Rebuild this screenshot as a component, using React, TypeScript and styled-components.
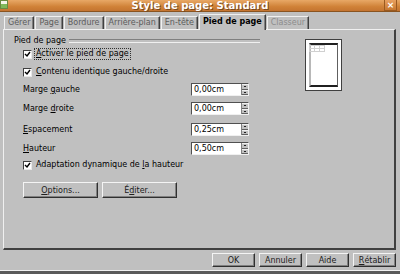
import React from "react";
import styled, { createGlobalStyle } from "styled-components";

const Global = createGlobalStyle`
  html, body { margin: 0; padding: 0; background: #c0c0c0; }
  body { font-family: "DejaVu Sans", "Liberation Sans", sans-serif; font-size: 8px; color: #000; }
  * { box-sizing: border-box; }
`;

const Window = styled.div`
  width: 400px;
  height: 274px;
  display: flex;
  flex-direction: column;
  background: #c0c0c0;
  position: relative;
  overflow: hidden;
`;

const TitleBar = styled.div`
  height: 12px;
  flex: none;
  background: linear-gradient(#e8a866, #d08238 60%, #c47430);
  border-bottom: 1px solid #8a5420;
  display: flex;
  align-items: center;
  justify-content: center;
  position: relative;
`;

const Title = styled.div`
  font-size: 10px;
  font-weight: bold;
  color: #fff;
  text-shadow: 1px 1px 0 #7a4a20;
  line-height: 11px;
`;

const AppIcon = styled.div`
  position: absolute;
  left: 0;
  top: 0;
  width: 8px;
  height: 9px;
  background: linear-gradient(#f4f4e8 50%, #7fb85a 50%);
  border: 1px solid #6a8a40;
`;

const CloseBtn = styled.div`
  position: absolute;
  right: 3px;
  top: 0;
  width: 13px;
  height: 11px;
  border: 1px solid #9a5a20;
  border-top: none;
  background: linear-gradient(#e8a060, #c87830);
  color: #fff;
  font-size: 9px;
  font-weight: bold;
  line-height: 10px;
  text-align: center;
`;

const TabsRow = styled.div`
  display: flex;
  align-items: flex-end;
  height: 16px;
  margin-top: 1px;
  padding-left: 4px;
  flex: none;
`;

const Tab = styled.div<{ $active?: boolean; $dim?: boolean }>`
  height: ${(p) => (p.$active ? 16 : 13)}px;
  padding: ${(p) => (p.$active ? "1px 3px 0 3px" : "0 3px")};
  margin-right: 1px;
  border-top: 1px solid #f0f0f0;
  border-left: 1px solid #f0f0f0;
  border-right: 1px solid #404040;
  box-shadow: inset -1px 0 0 #808080;
  font-weight: ${(p) => (p.$active ? "bold" : "normal")};
  color: ${(p) => (p.$active ? "#000" : p.$dim ? "#8c8c8c" : "#5c5c5c")};
  line-height: 12px;
  white-space: nowrap;
  position: relative;
  z-index: ${(p) => (p.$active ? 2 : 0)};
  background: #c0c0c0;
  margin-bottom: ${(p) => (p.$active ? -1 : 0)}px;
`;

const Panel = styled.div`
  margin: 0 4px 0 3px;
  height: 221px;
  flex: none;
  border-top: 1px solid #f0f0f0;
  border-left: 1px solid #f0f0f0;
  border-right: 2px solid #404040;
  border-bottom: 2px solid #404040;
  display: flex;
  padding: 4px 0 0 10px;
`;

const FormCol = styled.div`
  width: 246px;
  display: flex;
  flex-direction: column;
`;

const Section = styled.div`
  display: flex;
  align-items: center;
  height: 12px;
  gap: 3px;
  &::after {
    content: "";
    flex: 1;
    height: 2px;
    border-top: 1px solid #808080;
    border-bottom: 1px solid #f0f0f0;
    margin-top: 1px;
  }
`;

const CheckRow = styled.div<{ $mt: number }>`
  display: flex;
  align-items: center;
  margin-top: ${(p) => p.$mt}px;
  margin-left: 9px;
  height: 12px;
  gap: 2px;
`;

const Box = styled.div`
  width: 9px;
  height: 9px;
  background: #fff;
  border-top: 1px solid #404040;
  border-left: 1px solid #404040;
  border-right: 1px solid #e8e8e8;
  border-bottom: 1px solid #e8e8e8;
  display: flex;
  align-items: center;
  justify-content: center;
  flex: none;
`;

const CheckLabel = styled.span<{ $focus?: boolean }>`
  padding: 0 1px;
  line-height: 10px;
  border: 1px ${(p) => (p.$focus ? "dotted #303030" : "solid transparent")};
`;

const FieldRow = styled.div<{ $mt: number }>`
  display: flex;
  align-items: center;
  justify-content: space-between;
  margin-top: ${(p) => p.$mt}px;
  margin-left: 9px;
  height: 13px;
`;

const Spin = styled.div`
  width: 58px;
  height: 13px;
  background: #fff;
  border-top: 1px solid #505050;
  border-left: 1px solid #505050;
  border-right: 1px solid #f0f0f0;
  border-bottom: 1px solid #f0f0f0;
  display: flex;
  margin-right: 11px;
`;

const SpinText = styled.div`
  flex: 1;
  padding-left: 2px;
  line-height: 11px;
  font-size: 8px;
`;

const SpinBtns = styled.div`
  width: 7px;
  display: flex;
  flex-direction: column;
  background: #c0c0c0;
  border-left: 1px solid #808080;
`;

const SpinHalf = styled.div`
  flex: 1;
  display: flex;
  align-items: center;
  justify-content: center;
  border-top: 1px solid #f0f0f0;
  border-bottom: 1px solid #606060;
  &::before {
    content: "";
    width: 2px;
    height: 1px;
    background: #202020;
  }
`;

const ButtonsRow = styled.div`
  display: flex;
  gap: 4px;
  margin-top: 11px;
  margin-left: 9px;
`;

const Btn = styled.div<{ $w: number; $h?: number }>`
  width: ${(p) => p.$w}px;
  height: ${(p) => p.$h ?? 16}px;
  border-top: 1px solid #f4f4f4;
  border-left: 1px solid #f4f4f4;
  border-right: 1px solid #303030;
  border-bottom: 1px solid #303030;
  box-shadow: inset -1px -1px 0 #808080;
  display: flex;
  align-items: center;
  justify-content: center;
  line-height: 11px;
  color: #202020;
`;

const PreviewCol = styled.div`
  margin-left: 45px;
  padding-top: 5px;
`;

const PageOuter = styled.div`
  width: 37px;
  height: 52px;
  border: 1px solid #404040;
  background: #fff;
  padding: 3px;
`;

const PageInner = styled.div`
  width: 100%;
  height: 100%;
  border-top: 2px solid #202020;
  border-bottom: 2px solid #202020;
  border-left: 2px solid #b8b8b8;
  border-right: 1px solid #606060;
  position: relative;
`;

const MiniGrid = styled.div`
  position: absolute;
  left: -2px;
  top: 0;
  width: 16px;
  height: 7px;
  background-image: linear-gradient(#d0d0d0 1px, transparent 1px),
    linear-gradient(90deg, #d0d0d0 1px, transparent 1px);
  background-size: 5px 3px;
  border-right: 1px solid #d0d0d0;
  border-bottom: 1px solid #d0d0d0;
`;

const Footer = styled.div`
  display: flex;
  justify-content: flex-end;
  gap: 4px;
  padding: 3px 4px 0 0;
  flex: none;
`;

const BottomEdge = styled.div`
  margin-top: auto;
  height: 4px;
  border-top: 1px solid #f0f0f0;
  background: #5a5a5a;
`;

const U = styled.span`
  text-decoration: underline;
`;

const Check = () => (
  <svg width="7" height="7" viewBox="0 0 7 7">
    <path d="M1 3 L3 5 L6 1" stroke="#000" strokeWidth="1.4" fill="none" />
  </svg>
);

const spins = [
  { label: <>Marge <U>g</U>auche</>, value: "0,00cm", mt: 5 },
  { label: <>Marge <U>d</U>roite</>, value: "0,00cm", mt: 6 },
  { label: <><U>E</U>spacement</>, value: "0,25cm", mt: 8 },
  { label: <><U>H</U>auteur</>, value: "0,50cm", mt: 6 },
];

const tabs = ["Gérer", "Page", "Bordure", "Arrière-plan", "En-tête"];

export default function App() {
  return (
    <Window>
      <Global />
      <TitleBar>
        <AppIcon />
        <Title>Style de page: Standard</Title>
        <CloseBtn>×</CloseBtn>
      </TitleBar>
      <TabsRow>
        {tabs.map((t) => (
          <Tab key={t}>{t}</Tab>
        ))}
        <Tab $active>Pied de page</Tab>
        <Tab $dim>Classeur</Tab>
      </TabsRow>
      <Panel>
        <FormCol>
          <Section>Pied de page</Section>
          <CheckRow $mt={2}>
            <Box><Check /></Box>
            <CheckLabel $focus><U>A</U>ctiver le pied de page</CheckLabel>
          </CheckRow>
          <CheckRow $mt={6}>
            <Box><Check /></Box>
            <CheckLabel><U>C</U>ontenu identique gauche/droite</CheckLabel>
          </CheckRow>
          {spins.map((s, i) => (
            <FieldRow key={i} $mt={s.mt}>
              <span>{s.label}</span>
              <Spin>
                <SpinText>{s.value}</SpinText>
                <SpinBtns>
                  <SpinHalf />
                  <SpinHalf />
                </SpinBtns>
              </Spin>
            </FieldRow>
          ))}
          <CheckRow $mt={4}>
            <Box><Check /></Box>
            <CheckLabel>Adaptation dynamique de <U>l</U>a hauteur</CheckLabel>
          </CheckRow>
          <ButtonsRow>
            <Btn $w={75}><U>O</U>ptions...</Btn>
            <Btn $w={75}>É<U>d</U>iter...</Btn>
          </ButtonsRow>
        </FormCol>
        <PreviewCol>
          <PageOuter>
            <PageInner>
              <MiniGrid />
            </PageInner>
          </PageOuter>
        </PreviewCol>
      </Panel>
      <Footer>
        <Btn $w={43} $h={14}>OK</Btn>
        <Btn $w={43} $h={14}>Annuler</Btn>
        <Btn $w={43} $h={14}>Aide</Btn>
        <Btn $w={43} $h={14}><U>R</U>établir</Btn>
      </Footer>
      <BottomEdge />
    </Window>
  );
}
